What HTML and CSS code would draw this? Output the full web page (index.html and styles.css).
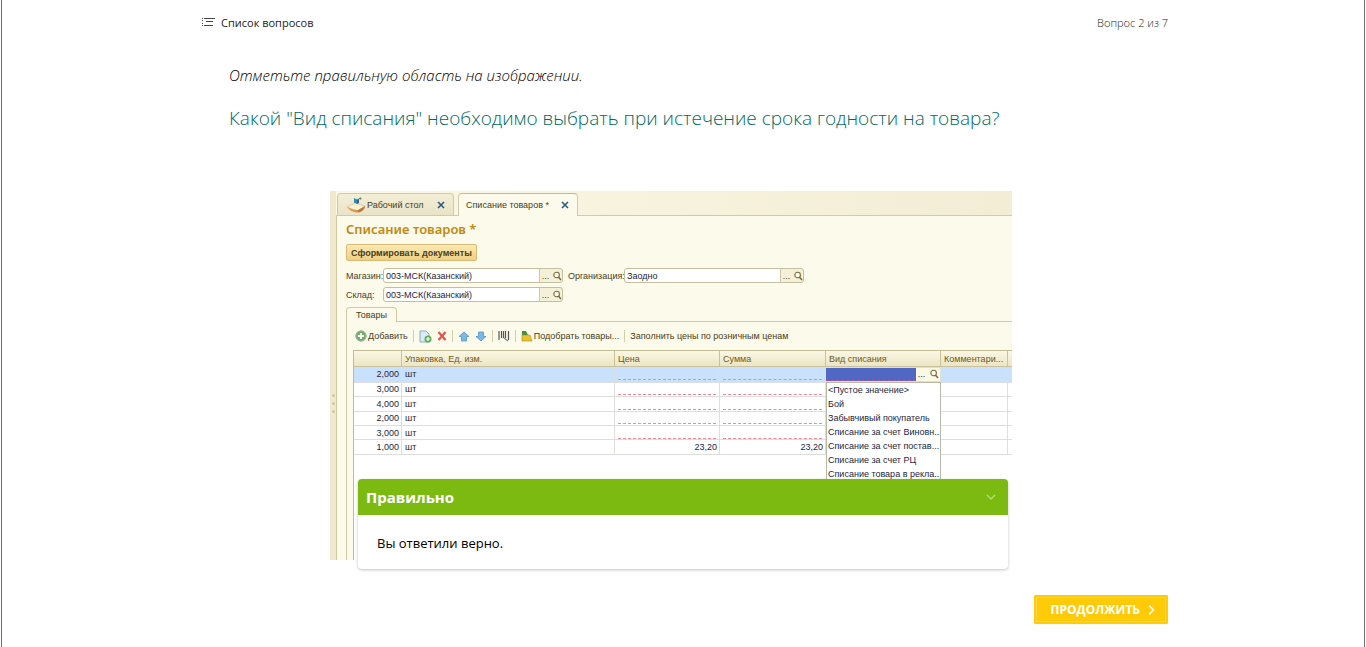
FILE: index.html
```
<!DOCTYPE html>
<html lang="ru">
<head>
  <meta charset="UTF-8" />
  <meta name="viewport" content="width=device-width, initial-scale=1.0"/>
  <title>Вопрос 2 из 7</title>
  <link rel="stylesheet" href="styles.css">
</head>
<body>

  <!-- shared icon -->
  <svg class="sprite" aria-hidden="true">
    <symbol id="lens" viewBox="0 0 10 10">
      <circle cx="4.6" cy="4" r="2.8" fill="#fffef0" stroke="#7b6a3a" stroke-width="1.1"/>
      <path d="M6.6 6.2 9 9" stroke="#7b6a3a" stroke-width="1.5"/>
    </symbol>
  </svg>

  <div class="frame">
    <div class="quiz">

      <header class="topbar">
        <button class="list-btn" type="button">
          <svg width="14" height="10" viewBox="0 0 14 10" fill="#444">
            <path d="M1 1h1v1H1zM1 3h1v1H1zM1 6h1v1H1zM1 8h1v1H1zM3 1h11v1H3zM5 4h7v1H5zM3 8h9v1H3z"/>
          </svg>
          Список вопросов
        </button>
        <span class="counter">Вопрос 2 из 7</span>
      </header>

      <main class="question">
        <p class="hint">Отметьте правильную область на изображении.</p>
        <h1>Какой "Вид списания" необходимо выбрать при истечение срока годности на товара?</h1>

        <div class="picture">
          <div class="app">
            <div class="side"><i></i><i></i><i></i></div>
            <div class="work">

              <div class="tabs">
                <div class="tab">
                  <svg width="21" height="18" viewBox="0 0 21 18">
                    <path d="M1 11l8-4 10 3-7 5z" fill="#fbf1d4" stroke="#dcb878" stroke-width=".6"/>
                    <path d="M1 11c3 2 7 3 11 3v2.500C7 16.500 3 14 1 11z" fill="#d99a52"/>
                    <path d="M12 14l7-4c0 3-3 6-7 6.500z" fill="#b9793a"/>
                    <path d="M8 2l3 1.500V8L8 6.500z" fill="#2d8bb5"/>
                    <path d="M11 3.500l2-1V7l-2 1z" fill="#3f5f86"/>
                    <path d="M13 2.500h2.500M14.300 1.300v2.500" stroke="#4c9b57" stroke-width="1"/>
                  </svg>
                  <span>Рабочий стол</span>
                  <button class="close" type="button" aria-label="Закрыть">
                    <svg width="8" height="8" viewBox="0 0 8 8"><path d="M1 1l6 6M7 1L1 7" stroke="#2c5a7c" stroke-width="1.6"/></svg>
                  </button>
                </div>
                <div class="tab active">
                  <span>Списание товаров *</span>
                  <button class="close" type="button" aria-label="Закрыть">
                    <svg width="8" height="8" viewBox="0 0 8 8"><path d="M1 1l6 6M7 1L1 7" stroke="#2c5a7c" stroke-width="1.6"/></svg>
                  </button>
                </div>
              </div>

              <div class="form">
                <h2>Списание товаров *</h2>
                <button class="create" type="button">Сформировать документы</button>

                <div class="fields">
                  <label for="shop">Магазин:</label>
                  <div class="field">
                    <input id="shop" type="text" value="003-МСК(Казанский)">
                    <button type="button" aria-label="Выбрать">...</button>
                    <button type="button" aria-label="Открыть"><svg width="10" height="10"><use href="#lens"/></svg></button>
                  </div>
                  <label for="org">Организация:</label>
                  <div class="field">
                    <input id="org" type="text" value="Заодно">
                    <button type="button" aria-label="Выбрать">...</button>
                    <button type="button" aria-label="Открыть"><svg width="10" height="10"><use href="#lens"/></svg></button>
                  </div>
                  <label for="stock">Склад:</label>
                  <div class="field">
                    <input id="stock" type="text" value="003-МСК(Казанский)">
                    <button type="button" aria-label="Выбрать">...</button>
                    <button type="button" aria-label="Открыть"><svg width="10" height="10"><use href="#lens"/></svg></button>
                  </div>
                </div>

                <div class="subtabs"><span>Товары</span></div>

                <div class="sheet">
                  <div class="toolbar">
                    <button type="button">
                      <svg width="12" height="12" viewBox="0 0 12 12"><circle cx="6" cy="6" r="5.200" fill="#6fb368" stroke="#a3b09c"/><path d="M6 3v6M3 6h6" stroke="#fff" stroke-width="2"/></svg>
                      Добавить
                    </button>
                    <i class="sep"></i>
                    <button type="button" aria-label="Скопировать">
                      <svg width="13" height="13" viewBox="0 0 13 13"><path d="M1 1h6l3 3v8H1z" fill="#dcebf5" stroke="#8aa9c4"/><circle cx="9" cy="9" r="3.500" fill="#5fae5a"/><path d="M9 7v4M7 9h4" stroke="#fff" stroke-width="1.200"/></svg>
                    </button>
                    <button type="button" aria-label="Удалить">
                      <svg width="10" height="10" viewBox="0 0 10 10"><path d="M1.500 1l7 8M8.500 1l-7 8" stroke="#dd5547" stroke-width="2.200"/></svg>
                    </button>
                    <i class="sep"></i>
                    <button type="button" aria-label="Вверх">
                      <svg width="12" height="11" viewBox="0 0 12 11"><path d="M6 1l5 4.500H8.500V10h-5V5.500H1z" fill="#7cb8e4" stroke="#5b92c4" stroke-width=".8"/></svg>
                    </button>
                    <button type="button" aria-label="Вниз">
                      <svg width="12" height="11" viewBox="0 0 12 11"><path d="M6 10L1 5.500h2.500V1h5v4.500H11z" fill="#7cb8e4" stroke="#5b92c4" stroke-width=".8"/></svg>
                    </button>
                    <i class="sep"></i>
                    <button type="button" aria-label="Штрихкод">
                      <svg width="12" height="12" viewBox="0 0 12 12"><path d="M1 1v9M3.500 1v7M5.500 1v7M7.500 1v7M10.500 1v9" stroke="#555" stroke-width="1.200"/><path d="M6 8l4 3" stroke="#888" stroke-width="1.500"/></svg>
                    </button>
                    <i class="sep"></i>
                    <button type="button">
                      <svg width="12" height="12" viewBox="0 0 12 12"><path d="M1 1h4l2 4H1z" fill="#3f8f45"/><path d="M1 5h8l2 6H1z" fill="#e9c431" stroke="#a98c1c" stroke-width=".6"/></svg>
                      Подобрать товары...
                    </button>
                    <i class="sep"></i>
                    <button type="button">Заполнить цены по розничным ценам</button>
                  </div>

                  <div class="grid">
                    <table>
                      <colgroup>
                        <col class="c-qty"><col class="c-unit"><col class="c-sum"><col class="c-total"><col class="c-kind"><col class="c-note"><col>
                      </colgroup>
                      <thead>
                        <tr><th></th><th>Упаковка, Ед. изм.</th><th>Цена</th><th>Сумма</th><th>Вид списания</th><th>Комментари...</th><th></th></tr>
                      </thead>
                      <tbody>
                        <tr class="selected">
                          <td class="num">2,000</td><td>шт</td><td><div class="empty"></div></td><td><div class="empty"></div></td>
                          <td class="kind">
                            <div class="picker">
                              <input type="text" aria-label="Вид списания">
                              <button type="button" aria-label="Выбрать">...</button>
                              <button type="button" aria-label="Открыть"><svg width="10" height="10"><use href="#lens"/></svg></button>
                            </div>
                            <ul class="options">
                              <li>&lt;Пустое значение&gt;</li>
                              <li>Бой</li>
                              <li>Забывчивый покупатель</li>
                              <li>Списание за счет Виновн...</li>
                              <li>Списание за счет постав...</li>
                              <li>Списание за счет РЦ</li>
                              <li>Списание товара в рекла...</li>
                            </ul>
                          </td>
                          <td></td><td></td>
                        </tr>
                        <tr><td class="num">3,000</td><td>шт</td><td><div class="empty"></div></td><td><div class="empty"></div></td><td></td><td></td><td></td></tr>
                        <tr><td class="num">4,000</td><td>шт</td><td><div class="empty"></div></td><td><div class="empty"></div></td><td></td><td></td><td></td></tr>
                        <tr><td class="num">2,000</td><td>шт</td><td><div class="empty"></div></td><td><div class="empty"></div></td><td></td><td></td><td></td></tr>
                        <tr><td class="num">3,000</td><td>шт</td><td><div class="empty"></div></td><td><div class="empty"></div></td><td></td><td></td><td></td></tr>
                        <tr><td class="num">1,000</td><td>шт</td><td class="num">23,20</td><td class="num">23,20</td><td></td><td></td><td></td></tr>
                      </tbody>
                    </table>
                  </div>
                </div>
              </div>
            </div>
          </div>

          <section class="feedback">
            <div class="feedback-head">
              <h2>Правильно</h2>
              <button type="button" aria-label="Свернуть">
                <svg width="10" height="6" viewBox="0 0 10 6"><path d="M1 1l4 4 4-4" fill="none" stroke="#b9e37c" stroke-width="1.200"/></svg>
              </button>
            </div>
            <p>Вы ответили верно.</p>
          </section>
        </div>
      </main>

      <footer class="bottom">
        <button class="next" type="button">
          <span>ПРОДОЛЖИТЬ</span>
          <svg width="7" height="12" viewBox="0 0 7 12"><path d="M1 1.500L5.500 6 1 10.500" fill="none" stroke="#fff" stroke-width="1.600"/></svg>
        </button>
      </footer>

    </div>
  </div>

</body>
</html>
```
FILE: styles.css
```
* {
  box-sizing: border-box;
}

body {
  margin: 0;
  background: #fff;
  color: #000;
  font-family: "Open Sans", "Noto Sans", sans-serif;
}

h1, h2, p, ul {
  margin: 0;
  padding: 0;
}

button {
  background: none;
  border: none;
  padding: 0;
  color: inherit;
  font: inherit;
  cursor: pointer;
}

svg {
  display: block;
  flex: none;
}

.sprite {
  position: absolute;
  width: 0;
  height: 0;
}

.frame {
  min-height: 100vh;
  margin: 0 1px;
  border: solid #6b6b6b;
  border-width: 0 1px;
}

.quiz {
  max-width: 970px;
  margin: 0 auto;
  padding: 13px 0 0 3px;
}

/* top line */
.topbar {
  display: flex;
  justify-content: space-between;
  align-items: center;
  height: 18px;
  font-size: 11px;
  color: #222;
}

.list-btn {
  display: flex;
  align-items: center;
  gap: 6px;
  font-weight: 500;
}

.counter {
  font-weight: 350;
}

/* question */
.question {
  padding: 32px 0 0 28px;
}

.hint {
  font-size: 15px;
  line-height: 24px;
  font-style: italic;
  font-weight: 330;
}

h1 {
  margin-top: 16px;
  font-size: 19px;
  line-height: 30px;
  font-weight: 330;
  color: #006a64;
}

.picture {
  position: relative;
  max-width: 682px;
  margin: 58px 0 0 101px;
}

/* application window */
.app {
  display: flex;
  height: 369px;
  overflow: hidden;
  background: #fcfaeb;
  font-family: "Liberation Sans", Arial, sans-serif;
  font-size: 9px;
  line-height: 12px;
  color: #4a4020;
}

.side {
  display: flex;
  flex-direction: column;
  align-items: center;
  justify-content: center;
  gap: 5px;
  width: 6px;
  padding-top: 55px;
  background: #efe9cf;
}

.side i {
  width: 3px;
  height: 3px;
  border-radius: 50%;
  background: #cfc8a4;
}

.work {
  flex: 1;
  min-width: 0;
  display: flex;
  flex-direction: column;
}

.tabs {
  display: flex;
  gap: 4px;
  height: 25px;
  padding: 2px 0 0 1px;
  background: linear-gradient(to right, #fbf7e4, #f3edd6);
  border-bottom: 1px solid #cfcbab;
}

.tab {
  display: flex;
  align-items: center;
  width: 117px;
  height: 22px;
  padding: 0 8px;
  background: linear-gradient(#f3eed6, #e9e3c8);
  border: 1px solid #cfcaa8;
  border-bottom: 0;
  border-radius: 4px 4px 0 0;
}

.tab.active {
  width: 120px;
  height: 23px;
  padding-left: 7px;
  background: #fcfaeb;
  border-top-color: #e3b45c;
}

.tab .close {
  margin-left: auto;
}

.form {
  flex: 1;
  display: flex;
  flex-direction: column;
  align-items: flex-start;
  padding: 5px 0 0 9px;
  border-left: 1px solid #cfcaa2;
}

.form h2 {
  font-family: "Noto Sans", sans-serif;
  font-size: 13px;
  line-height: 16px;
  font-weight: 600;
  color: #c08a10;
}

.create {
  height: 17px;
  margin-top: 7px;
  padding: 0 4px;
  background: linear-gradient(#fbe9b4, #efcf83);
  border: 1px solid #d9bb74;
  border-radius: 2px;
  font-weight: 700;
}

.fields {
  display: grid;
  grid-template-columns: 37px 180px 61px 180px;
  row-gap: 4px;
  align-items: center;
  margin-top: 7px;
}

.fields label {
  white-space: nowrap;
}

.fields label[for="org"] {
  padding-left: 5px;
}

.field {
  display: flex;
  align-items: center;
  height: 15px;
  background: #f5f0d8;
  border: 1px solid #c4bea2;
  border-radius: 3px;
}

.field input {
  flex: 1;
  min-width: 0;
  height: 13px;
  padding: 0 2px;
  border: 0;
  border-right: 1px solid #cfc9a8;
  border-radius: 3px 0 0 3px;
  background: #fff;
  color: #26263c;
  font: inherit;
}

.field button,
.picker button {
  display: flex;
  justify-content: center;
  width: 11px;
  line-height: 12px;
}

.subtabs {
  display: flex;
  align-self: stretch;
  height: 15px;
  margin-top: 5px;
  border-bottom: 1px solid #cfcaa2;
}

.subtabs span {
  height: 15px;
  padding: 0 9px;
  line-height: 14px;
  background: #fcfaeb;
  border: 1px solid #cfcaa2;
  border-bottom: 0;
  border-radius: 4px 4px 0 0;
}

.sheet {
  flex: 1;
  align-self: stretch;
  display: flex;
  flex-direction: column;
  padding-left: 6px;
  border-left: 1px solid #cfcaa2;
}

.toolbar {
  display: flex;
  align-items: center;
  gap: 5px;
  height: 28px;
  padding-left: 2px;
}

.toolbar button {
  display: flex;
  align-items: center;
  gap: 1px;
  white-space: nowrap;
}

.sep {
  width: 1px;
  height: 12px;
  background: #d3cda9;
}

.grid {
  flex: 1;
  background: #fff;
  border-top: 1px solid #c3bb94;
  border-left: 1px solid #c3bb94;
}

table {
  width: 100%;
  height: 104px;
  table-layout: fixed;
  border-collapse: separate;
  border-spacing: 0;
}

.c-qty { width: 48px; }
.c-unit { width: 213px; }
.c-sum { width: 105px; }
.c-total { width: 106px; }
.c-kind { width: 115px; }
.c-note { width: 67px; }

th {
  height: 16px;
  padding: 0 3px;
  background: linear-gradient(#fbf7e3, #ece5c5);
  border-right: 1px solid #c9c29c;
  border-bottom: 1px solid #c9c29c;
  font-weight: 400;
  text-align: left;
  white-space: nowrap;
  color: #6f5a1e;
}

td {
  padding: 0 3px;
  border-right: 1px solid #dcdfdc;
  border-bottom: 1px solid #dcdfdc;
  color: #26263c;
}

th:last-child,
td:last-child {
  padding: 0;
  border-right: 0;
}

td.num {
  padding-right: 2px;
  text-align: right;
}

.selected td {
  background: #c9e1fc;
}

.empty {
  height: 12px;
  border-bottom: 1px dashed #f08a98;
}

td.kind {
  position: relative;
  padding: 0;
}

.picker {
  display: flex;
  align-items: center;
  height: 13px;
  background: #fbf8e6;
}

.picker input {
  flex: 1;
  min-width: 0;
  height: 13px;
  padding: 0 2px;
  border: 0;
  border-bottom: 1px dashed #b0508c;
  background: #5068c4;
  color: #fff;
  font: inherit;
}

.picker button:last-child {
  width: 13px;
}

.options {
  position: absolute;
  top: 100%;
  left: 0;
  width: 115px;
  overflow: hidden;
  background: #fff;
  border: 1px solid #b9b9a8;
  list-style: none;
}

.options li {
  padding-left: 1px;
  line-height: 14px;
  white-space: nowrap;
}

/* answer result */
.feedback {
  position: absolute;
  top: 288px;
  left: 28px;
  right: 4px;
  background: #fff;
  border-radius: 4px;
  box-shadow: 0 1px 3px rgba(0, 0, 0, 0.25);
}

.feedback-head {
  display: flex;
  justify-content: space-between;
  align-items: center;
  height: 36px;
  padding: 0 12px 0 8px;
  background: #7cba12;
  border-radius: 4px 4px 0 0;
  color: #fff;
}

.feedback h2 {
  font-size: 15px;
  font-weight: 700;
}

.feedback p {
  padding: 18px 19px 16px;
  font-size: 13px;
  line-height: 20px;
}

.bottom {
  display: flex;
  justify-content: flex-end;
  padding-top: 35px;
}

.next {
  display: flex;
  align-items: center;
  gap: 8px;
  height: 29px;
  padding: 0 13px 0 17px;
  background: #ffcb08;
  border-radius: 2px;
  box-shadow: inset 0 0 0 2px #ffcb08, inset 0 0 0 3px #ffd84a;
  color: #fff;
  font-size: 12px;
  font-weight: 700;
}
```
